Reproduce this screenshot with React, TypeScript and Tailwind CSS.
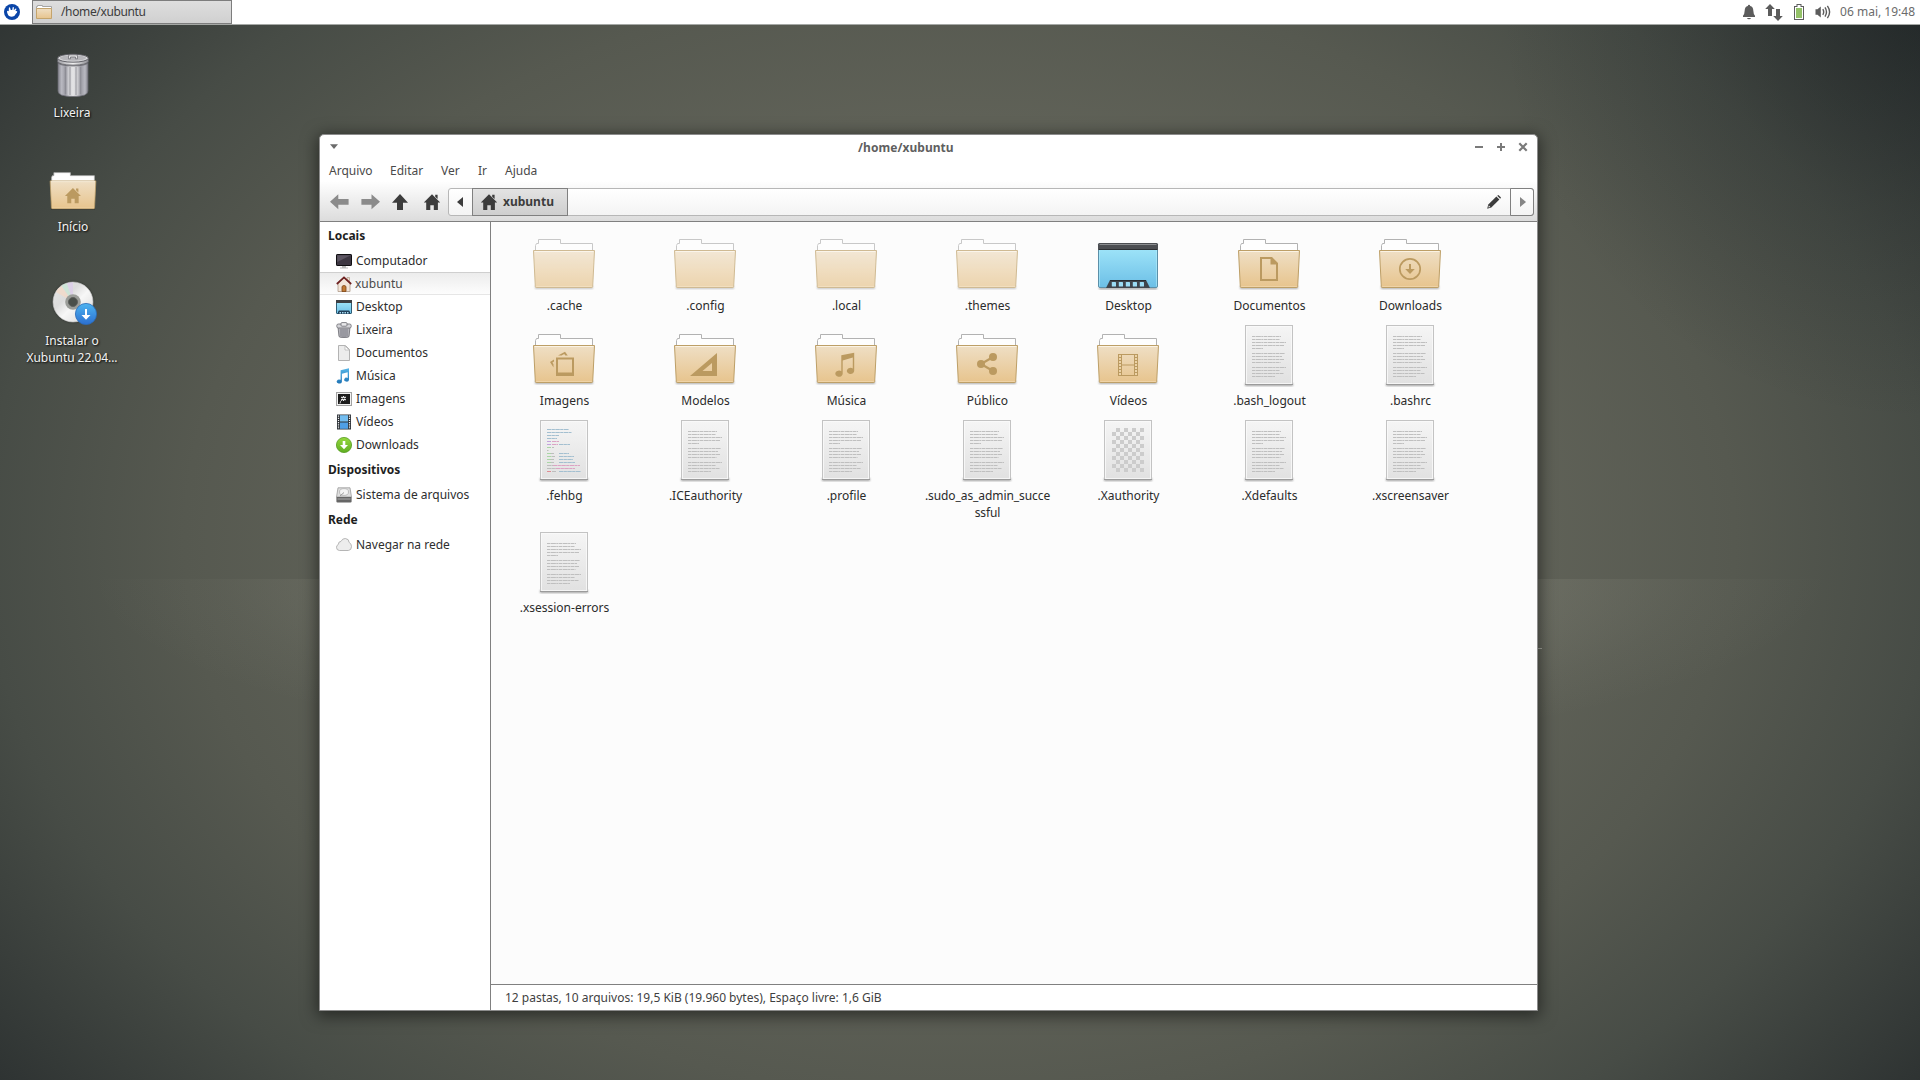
import type { ReactNode } from "react";

const GLYPH = "#bb9a60";

function HomeShape({ fill }: { fill: string }) {
  return <path fill={fill} d="M8 0.3 L16.2 8.6 H13.9 V16 H9.8 V11.3 H6.3 V16 H2.2 V8.6 H-0.2 Z M11.2 0.8 H13.6 V5 L11.2 2.8 Z" />;
}

function Defs() {
  return (
    <svg className="absolute h-0 w-0" aria-hidden="true">
      <defs>
        <linearGradient id="folder" x1="0" y1="0" x2="0" y2="1">
          <stop offset="0" stopColor="#efdfc5" />
          <stop offset="1" stopColor="#e7c48d" />
        </linearGradient>
        <linearGradient id="paper" x1="0" y1="0" x2="0" y2="1">
          <stop offset="0" stopColor="#f5f5f5" />
          <stop offset="1" stopColor="#e1e1e1" />
        </linearGradient>
        <linearGradient id="screen" x1="0" y1="0" x2="0" y2="1">
          <stop offset="0" stopColor="#a4e8fb" />
          <stop offset="1" stopColor="#6cbfe6" />
        </linearGradient>
        <linearGradient id="steel" x1="0" y1="0" x2="1" y2="0">
          <stop offset="0" stopColor="#85858e" />
          <stop offset="0.12" stopColor="#b9b9c1" />
          <stop offset="0.25" stopColor="#9b9ba3" />
          <stop offset="0.36" stopColor="#d0d0d4" />
          <stop offset="0.5" stopColor="#e4e4e6" />
          <stop offset="0.64" stopColor="#d0d0d4" />
          <stop offset="0.76" stopColor="#9b9ba3" />
          <stop offset="0.9" stopColor="#b9b9c1" />
          <stop offset="1" stopColor="#7f7f87" />
        </linearGradient>
        <linearGradient id="lid" x1="0" y1="0" x2="1" y2="0">
          <stop offset="0" stopColor="#9a9aa0" />
          <stop offset="0.5" stopColor="#f2f2f2" />
          <stop offset="1" stopColor="#8e8e94" />
        </linearGradient>
        <linearGradient id="badge" x1="0" y1="0" x2="0" y2="1">
          <stop offset="0" stopColor="#4db4f0" />
          <stop offset="1" stopColor="#2c6fd0" />
        </linearGradient>
        <linearGradient id="disc" x1="0" y1="0" x2="1" y2="1">
          <stop offset="0" stopColor="#e8e8e8" />
          <stop offset="0.35" stopColor="#dcdcdc" />
          <stop offset="0.55" stopColor="#f7f7f7" />
          <stop offset="1" stopColor="#d4d4d4" />
        </linearGradient>
        <linearGradient id="note" x1="0" y1="0" x2="0" y2="1">
          <stop offset="0" stopColor="#55b5e8" />
          <stop offset="1" stopColor="#1f74b5" />
        </linearGradient>
        <linearGradient id="green" x1="0" y1="0" x2="0" y2="1">
          <stop offset="0" stopColor="#96d83e" />
          <stop offset="1" stopColor="#5fae22" />
        </linearGradient>
        <filter id="soft" x="-20%" y="-20%" width="140%" height="140%">
          <feGaussianBlur stdDeviation="1" />
        </filter>
      </defs>
    </svg>
  );
}

function Folder({ size, dim, children }: { size: 64 | 48; dim?: boolean; children?: ReactNode }) {
  return (
    <svg viewBox="0 0 64 64" className={(size === 64 ? "size-16" : "size-12") + " overflow-visible" + (dim ? " opacity-70" : "")}>
      <path d="M3 58 H61 V61 H3 Z" fill="#000" opacity="0.3" filter="url(#soft)" />
      <path d="M3.5 25 V17.5 L4.5 15.5 L6.5 15.5 V11.5 H28.5 V15.5 H60.5 V25 Z" fill="#fefefe" stroke="#b2b2b2" strokeWidth="1" />
      <path d="M1.5 22.5 H62.5 L60.7 58.6 Q60.6 59.5 59.8 59.5 H4.2 Q3.4 59.5 3.3 58.6 Z" fill="url(#folder)" stroke="#bd9f67" strokeWidth="1" />
      <path d="M2.6 23.5 H61.4" stroke="#fbf3e4" strokeWidth="1" />
      <path d="M4.3 58.5 H59.8" stroke="#efd3a6" strokeWidth="1" />
      {children}
    </svg>
  );
}

const textRows = [
  [13, 29], [16, 28], [19, 34], [22, 32], [25, 11],
  [30, 33], [33, 30], [36, 32], [39, 28.5],
  [44, 34], [47, 28], [50, 31.5], [53, 23],
];

const scriptRows: [number, number, number, string][] = [
  [11, 0, 22, "#a3bfd0"], [14, 0, 24.5, "#a3bfd0"], [17, 0, 12, "#a3bfd0"], [20, 0, 10, "#a3bfd0"],
  [23, 0, 4, "#c3a3de"], [23, 5, 7, "#dca3c4"],
  [26, 0, 4, "#c3a3de"], [26, 5, 6, "#dca3c4"], [26, 12, 11, "#a3bfd0"],
  [29, 0, 4, "#aad6a6"], [29, 5, 2, "#bdbdbd"], [32, 0, 1.5, "#bdbdbd"],
  [35, 0, 4, "#aad6a6"], [35, 4, 3, "#bdbdbd"], [35, 12, 10, "#a3bfd0"],
  [38, 0, 5, "#aad6a6"], [38, 5, 3, "#bdbdbd"], [38, 12, 15, "#a3bfd0"],
  [41, 0, 4, "#aad6a6"], [41, 4, 3, "#bdbdbd"], [41, 12, 14, "#a3bfd0"],
  [44, 0, 4, "#aad6a6"], [44, 4, 3, "#bdbdbd"], [44, 12, 16, "#a3bfd0"],
  [47, 0, 6, "#bdbdbd"], [47, 6, 27, "#dca3c4"],
  [50, 0, 9, "#bdbdbd"], [50, 9, 19, "#dca3c4"],
  [53, 0, 4, "#e08b93"], [53, 5, 4, "#bdbdbd"], [53, 12, 22, "#a3bfd0"],
];

const checks = Array.from({ length: 88 }, (_, i) => [i % 8, Math.floor(i / 8)]).filter(([c, r]) => (c + r) % 2 === 1);

function Paper({ kind }: { kind: "text" | "script" | "binary" }) {
  return (
    <svg viewBox="0 0 64 64" className="size-16 overflow-visible">
      <path d="M8 60 H56 V63 H8 Z" fill="#000" opacity="0.35" filter="url(#soft)" />
      <rect x="8.5" y="2.5" width="47" height="59" fill="url(#paper)" stroke="#c3c3c3" />
      <rect x="9.5" y="3.5" width="45" height="57" fill="none" stroke="#fafafa" strokeOpacity="0.8" />
      <path d="M8 61.5 H56" stroke="#9b9b9b" />
      {kind === "text" &&
        textRows.map(([y, w]) => (
          <path key={y} d={`M15 ${y + 0.5} h${w}`} stroke="#bfbfbf" strokeWidth="1" strokeDasharray="3.4 0.5 5 0.4 2 0.5" />
        ))}
      {kind === "script" &&
        scriptRows.map(([y, x, w, c], i) => (
          <path key={i} d={`M${15 + x} ${y + 0.5} h${w}`} stroke={c} strokeWidth="1" strokeDasharray="4.5 0.4 3 0.4" />
        ))}
      {kind === "binary" && checks.map(([c, r]) => <rect key={`${c}-${r}`} x={16 + c * 4} y={10 + r * 4} width="4" height="4" fill="#cccccc" />)}
    </svg>
  );
}

function DesktopIcon() {
  return (
    <svg viewBox="0 0 64 64" className="size-16 overflow-visible">
      <path d="M3 59 H61 V61.5 H3 Z" fill="#000" opacity="0.35" filter="url(#soft)" />
      <rect x="2.5" y="15.5" width="59" height="44" rx="1.5" fill="url(#screen)" stroke="#5b8fa8" />
      <path d="M3.5 22 V58.5 M60.5 22 V58.5" stroke="#b4ecfb" strokeOpacity="0.6" />
      <path d="M2 22 V16.5 Q2 15 3.5 15 H60.5 Q62 15 62 16.5 V22 Z" fill="#4c4e52" />
      <path d="M3.5 16.5 H60.5" stroke="#8a8c8f" />
      <path d="M3 21.5 H61" stroke="#2c2e31" />
      <path d="M10 60 L14 52 H50 L54 60 Z" fill="#3f454c" />
      <path d="M14 52.5 H50" stroke="#262b30" />
      {[0, 1, 2, 3, 4].map((i) => (
        <rect key={i} x={15.8 + i * 7} y="54" width="4.2" height="4.6" rx="0.6" fill="#9bdcf5" />
      ))}
    </svg>
  );
}

const glyphs: Record<string, ReactNode> = {
  Documentos: (
    <path fill={GLYPH} fillRule="evenodd" d="M23 29 H35 L41 35 V53 H23 Z M25 31 V51 H39 V36.5 H33.5 V31 Z" />
  ),
  Downloads: (
    <>
      <circle cx="32" cy="41" r="10.2" fill="none" stroke={GLYPH} strokeWidth="1.7" />
      <path fill={GLYPH} d="M31 36 H33 V41 H36.8 L32 46 L27.2 41 H31 Z" />
    </>
  ),
  Imagens: (
    <>
      <path fill={GLYPH} fillRule="evenodd" d="M24 34.5 H42 V53 H24 Z M26 36.5 V49.5 H40 V36.5 Z" />
      <path fill={GLYPH} d="M26 32.5 L33 28.8 L35.8 32.5 H33.4 L32.2 31 L29.6 32.5 Z M22 36.5 L18 39 L21.5 44.5 V41.2 L20.4 39.6 L22 38.6 Z" />
    </>
  ),
  Modelos: <path fill={GLYPH} fillRule="evenodd" d="M17 53 L44 30 V53 Z M29.5 48 H39 V40 Z" />,
  Música: (
    <path fill={GLYPH} d="M27.3 32.3 L40.2 29.8 V47.8 A3.7 3.1 0 1 1 38.8 45.5 V34.6 L28.7 37.4 V50.8 A3.7 3.1 0 1 1 27.3 48.3 Z" />
  ),
  Público: (
    <>
      <path d="M38 34 L26 41 L38 48" fill="none" stroke={GLYPH} strokeWidth="2.2" />
      <circle cx="26" cy="41" r="4" fill={GLYPH} />
      <circle cx="38" cy="34" r="4" fill={GLYPH} />
      <circle cx="38" cy="48" r="4" fill={GLYPH} />
    </>
  ),
  Vídeos: (
    <>
      <path fill={GLYPH} fillRule="evenodd" d="M22 31 H42 V53 H22 Z M26 32 V41.5 H38 V32 Z M26 42.5 V52 H38 V42.5 Z" />
      {[0, 1, 2, 3, 4, 5, 6].map((i) => (
        <g key={i} fill="#ecd3a8">
          <rect x="23" y={32 + i * 3} width="2" height="2" />
          <rect x="39" y={32 + i * 3} width="2" height="2" />
        </g>
      ))}
    </>
  ),
};

type Kind = "dim" | "folder" | "desktop" | "text" | "script" | "binary";
const files: [string, Kind][] = [
  [".cache", "dim"], [".config", "dim"], [".local", "dim"], [".themes", "dim"],
  ["Desktop", "desktop"], ["Documentos", "folder"], ["Downloads", "folder"],
  ["Imagens", "folder"], ["Modelos", "folder"], ["Música", "folder"], ["Público", "folder"], ["Vídeos", "folder"],
  [".bash_logout", "text"], [".bashrc", "text"],
  [".fehbg", "script"], [".ICEauthority", "text"], [".profile", "text"], [".sudo_as_admin_successful", "text"],
  [".Xauthority", "binary"], [".Xdefaults", "text"], [".xscreensaver", "text"],
  [".xsession-errors", "text"],
];

function FileItem({ name, kind }: { name: string; kind: Kind }) {
  return (
    <div className="flex flex-col items-center pb-[9px]">
      {kind === "dim" && <Folder size={64} dim />}
      {kind === "folder" && <Folder size={64}>{glyphs[name]}</Folder>}
      {kind === "desktop" && <DesktopIcon />}
      {(kind === "text" || kind === "script" || kind === "binary") && <Paper kind={kind} />}
      <div
        className={
          "mt-[5px] w-[128px] pl-px text-center leading-[17px] break-all text-[#2b2b2b]" +
          (name.length > 20 ? " tracking-[-0.08px]" : "")
        }
      >
        {name}
      </div>
    </div>
  );
}

function TrashCan({ className }: { className: string }) {
  return (
    <svg viewBox="0 0 32 44" className={className}>
      <path d="M1 8 H31 V38 Q31 43.5 16 43.5 Q1 43.5 1 38 Z" fill="url(#steel)" stroke="#6a6a72" strokeWidth="0.7" />
      <path d="M8.5 14 V41 M13 14 V42 M19 14 V42 M23.5 14 V41" stroke="#808088" strokeWidth="1.5" opacity="0.5" />
      <ellipse cx="16" cy="10" rx="15" ry="3.4" fill="#55555c" opacity="0.6" />
      <path d="M0.6 5.5 V8.4 Q2 12 16 12 Q30 12 31.4 8.4 V5.5 Z" fill="url(#lid)" stroke="#5c5c62" strokeWidth="0.7" />
      <ellipse cx="16" cy="5.2" rx="15.3" ry="4" fill="#dadadc" stroke="#55555b" strokeWidth="0.9" />
      <ellipse cx="16" cy="5" rx="13" ry="2.7" fill="#b6b6ba" />
      <path d="M11.5 5.8 V3 Q11.5 1.8 13 1.8 H19 Q20.5 1.8 20.5 3 V5.8 H18.5 V4 H13.5 V5.8 Z" fill="#e2e2e4" stroke="#66666b" strokeWidth="0.7" />
    </svg>
  );
}

const placeIcons: Record<string, ReactNode> = {
  Computador: (
    <svg viewBox="0 0 16 16" className="size-4">
      <rect x="0.5" y="1.5" width="15" height="11" rx="0.6" fill="#3c3641" stroke="#0e0d10" />
      <path d="M1.2 2.2 H14.8 L1.2 9 Z" fill="#6a6371" opacity="0.7" />
      <path d="M6 13 H10 V14.5 H12 V15.5 H4 V14.5 H6 Z" fill="#b9b9b9" />
    </svg>
  ),
  xubuntu: (
    <svg viewBox="0 0 16 16" className="size-4">
      <path d="M11 1.5 H13.5 V6 H11 Z" fill="#e8ddd0" stroke="#a8907e" strokeWidth="0.6" />
      <path d="M2 7 L8 2 L14 7 V15.5 H2 Z" fill="#f2e6da" stroke="#b09a88" strokeWidth="0.8" />
      <path d="M6 15.5 V11 Q6 9.5 8 9.5 Q10 9.5 10 11 V15.5 Z" fill="#c07a34" stroke="#7d4515" strokeWidth="0.8" />
      <path d="M0.8 8 L8 1.4 L15.2 8" fill="none" stroke="#6d2020" strokeWidth="1.7" />
    </svg>
  ),
  Desktop: (
    <svg viewBox="0 0 16 16" className="size-4">
      <rect x="0.5" y="1.5" width="15" height="13" rx="0.5" fill="url(#screen)" stroke="#2f5d75" />
      <path d="M0 1 H16 V4 H0 Z" fill="#3c3f43" />
      <path d="M2 15 V12.5 L3 11.5 H13 L14 12.5 V15 Z" fill="#22415a" />
      <path d="M3.5 13 H5 V14.5 H3.5 Z M6 13 H7.5 V14.5 H6 Z M8.5 13 H10 V14.5 H8.5 Z M11 13 H12.5 V14.5 H11 Z" fill="#a5dbf2" />
    </svg>
  ),
  Lixeira: (
    <svg viewBox="0 0 16 16" className="size-4">
      <path d="M2 5 H14 L13 14.5 Q13 15.5 8 15.5 Q3 15.5 3 14.5 Z" fill="#b5b5bb" stroke="#74747b" strokeWidth="0.9" />
      <path d="M5 7 V14.5 M7 7 V15 M9 7 V15 M11 7 V14.5" stroke="#70707a" strokeWidth="0.8" />
      <rect x="0.8" y="2" width="14.4" height="4" rx="1.6" fill="#d4d4d8" stroke="#77777d" strokeWidth="0.9" />
      <rect x="5" y="0.6" width="6" height="3.6" rx="1" fill="#e8e8ea" stroke="#77777d" strokeWidth="0.9" />
    </svg>
  ),
  Documentos: (
    <svg viewBox="0 0 16 16" className="size-4">
      <path d="M2.5 0.5 H9.5 L13.5 4.5 V15.5 H2.5 Z" fill="#ececec" stroke="#b3b3b3" />
      <path d="M9 1 V5 H13.2 Z" fill="#fdfdfd" stroke="#b9b9b9" strokeWidth="0.8" />
    </svg>
  ),
  Música: (
    <svg viewBox="0 0 16 16" className="size-4">
      <path fill="url(#note)" d="M4.6 2.2 L13 0.2 V12 A2.4 2 0 1 1 11.7 9.9 V4.2 L5.9 5.7 V14 A2.6 2 0 1 1 4.6 11.8 Z" />
    </svg>
  ),
  Imagens: (
    <svg viewBox="0 0 16 16" className="size-4">
      <rect x="0.5" y="1.5" width="15" height="13" fill="#f2f2f2" stroke="#a2a2a2" />
      <rect x="2" y="3" width="12" height="10" fill="#1d1d1d" />
      <path d="M7.5 5 V10 M5.2 6 L9.8 9 M9.8 6 L5.2 9" stroke="#f0f0f0" strokeWidth="1.3" />
      <circle cx="7.5" cy="7.5" r="0.8" fill="#1d1d1d" />
      <path d="M5.8 9 Q4 10.5 4 12.5" stroke="#d8d8d8" fill="none" />
    </svg>
  ),
  Vídeos: (
    <svg viewBox="0 0 16 16" className="size-4">
      <rect x="1" y="0.5" width="14" height="15" fill="#2f343a" />
      <rect x="4" y="1.2" width="8" height="6.3" fill="#73bdf0" />
      <rect x="4" y="8.5" width="8" height="6.3" fill="#4f9fe6" />
      <path d="M2.5 1.5 V15 M13.5 1.5 V15" stroke="#f3f3f3" strokeWidth="1.2" strokeDasharray="1.2 1" />
    </svg>
  ),
  Downloads: (
    <svg viewBox="0 0 16 16" className="size-4">
      <circle cx="8" cy="8" r="7.6" fill="url(#green)" stroke="#559c1f" strokeWidth="0.8" />
      <path d="M6.7 4 H9.3 V8 H12 L8 12.2 L4 8 H6.7 Z" fill="#fff" />
    </svg>
  ),
  "Sistema de arquivos": (
    <svg viewBox="0 0 16 16" className="size-4">
      <path d="M2 0.8 H14 L15.5 10 H0.5 Z" fill="#dedede" stroke="#9a9a9a" strokeWidth="0.8" />
      <ellipse cx="8" cy="5" rx="4.5" ry="3.4" fill="#f4f4f4" stroke="#b0b0b0" strokeWidth="0.8" />
      <path d="M8 5.5 L4 9" stroke="#9d9d9d" />
      <path d="M0.4 10 H15.6 V14.5 Q15.6 15.6 14.5 15.6 H1.5 Q0.4 15.6 0.4 14.5 Z" fill="#666" />
      <path d="M1.5 12 H14.5" stroke="#a8a8a8" />
    </svg>
  ),
  "Navegar na rede": (
    <svg viewBox="0 0 16 16" className="size-4">
      <path d="M3.4 13.5 Q0.5 13.3 0.5 10.3 Q0.5 8.2 2.4 7.4 Q2.2 4.6 5 4.4 Q6.3 1.4 9.3 1.5 Q13 1.8 13.2 5.5 Q15.5 6.6 15.5 9.6 Q15.4 13.4 12.3 13.5 Z" fill="#ededed" stroke="#aeaeae" strokeWidth="0.9" />
    </svg>
  ),
};

function Header({ children }: { children: string }) {
  return <div className="h-[27px] pl-2 leading-[28px] font-bold text-[#1e1e1e]">{children}</div>;
}

function Place({ name, active }: { name: string; active?: boolean }) {
  return (
    <div
      className={
        "flex h-[23px] items-center gap-1 pl-4 " +
        (active
          ? "border-t border-b border-t-[#cfcfcf] border-b-[#e6e6e6] bg-linear-to-b from-[#ececec] to-[#fdfdfd] text-[#4a4a4a]"
          : "text-[#2e2e2e]")
      }
    >
      {placeIcons[name]}
      <span className={active ? "-ml-px leading-[17px]" : "leading-[17px]"}>{name}</span>
    </div>
  );
}

function Sidebar() {
  return (
    <div className="w-[171px] shrink-0 border-r border-[#808080] bg-white">
      <Header>Locais</Header>
      <Place name="Computador" />
      <Place name="xubuntu" active />
      <Place name="Desktop" />
      <Place name="Lixeira" />
      <Place name="Documentos" />
      <Place name="Música" />
      <Place name="Imagens" />
      <Place name="Vídeos" />
      <Place name="Downloads" />
      <Header>Dispositivos</Header>
      <Place name="Sistema de arquivos" />
      <Header>Rede</Header>
      <Place name="Navegar na rede" />
    </div>
  );
}

function TitleBar() {
  return (
    <div className="flex h-[24px] items-center pr-[10px] pl-[10px]">
      <svg viewBox="0 0 8 6" className="h-[6px] w-2">
        <path d="M0 0.3 H8 L4 5 Z" fill="#6b6b6b" />
      </svg>
      <div className="flex-1 pl-[14px]">
        <div className="ml-[506px] leading-[17px] font-bold tracking-[0.05px] whitespace-nowrap text-[#5f5f5f]">/home/xubuntu</div>
      </div>
      <div className="flex items-center gap-[14px]">
        <svg viewBox="0 0 8 8" className="size-2">
          <path d="M0 3 H8 V5 H0 Z" fill="#7a7a7a" />
        </svg>
        <svg viewBox="0 0 8 8" className="size-2">
          <path d="M0 3 H3 V0 H5 V3 H8 V5 H5 V8 H3 V5 H0 Z" fill="#7a7a7a" />
        </svg>
        <svg viewBox="0 0 8 8" className="size-2 overflow-visible">
          <path d="M0.3 0.3 L7.7 7.7 M7.7 0.3 L0.3 7.7" stroke="#7a7a7a" strokeWidth="2.2" />
        </svg>
      </div>
    </div>
  );
}

function Toolbar() {
  return (
    <div className="flex h-[41px] items-center border-b border-[#808080] bg-linear-to-b from-white to-[#dcdcdc] pt-px pr-[3px] pl-[10px]">
      <svg viewBox="0 0 19 16" className="h-4 w-[19px]">
        <path d="M0 7.8 L8.3 0.3 V4.9 H18.6 V10.7 H8.3 V15.3 Z" fill="#8b8b8b" />
      </svg>
      <svg viewBox="0 0 19 16" className="ml-[12px] h-4 w-[19px]">
        <path d="M19 7.8 L10.5 0.3 V4.9 H0.4 V10.7 H10.5 V15.3 Z" fill="#8b8b8b" />
      </svg>
      <svg viewBox="0 0 16 16" className="ml-[12px] h-4 w-4">
        <path d="M8 0 L16 8.8 H11 V16 H5 V8.8 H0 Z" fill="#3c3c3c" />
      </svg>
      <svg viewBox="0 0 16 16" className="ml-[16px] size-4 overflow-visible">
        <HomeShape fill="#3c3c3c" />
      </svg>
      <div className="ml-[8px] flex h-[28px] flex-1 items-stretch rounded-[3px] border border-[#b7b7b7] bg-linear-to-b from-white to-[#f4f4f4]">
        <div className="flex w-[23px] items-center justify-center pr-px">
          <svg viewBox="0 0 6 10" className="h-[10px] w-[6px]">
            <path d="M6 0 V10 L0 5 Z" fill="#3c3c3c" />
          </svg>
        </div>
        <div className="-my-px flex w-[96px] items-center border border-[#808080] bg-linear-to-b from-[#e3e3e3] to-[#cfcfcf] pl-2 font-bold text-[#3c3c3c]">
          <svg viewBox="0 0 16 16" className="mr-[6px] size-4 overflow-visible">
            <HomeShape fill="#3c3c3c" />
          </svg>
          xubuntu
        </div>
        <div className="flex flex-1 items-center justify-end pr-2">
          <svg viewBox="0 0 16 16" className="size-4">
            <path d="M1.2 14.8 L2.3 10.6 L10.4 2.5 L13.4 5.5 L5.3 13.6 Z" fill="#3c3c3c" />
            <path d="M11.2 1.8 L12.4 0.9 L15 3.5 L14.2 4.8 Z" fill="#3c3c3c" />
            <path d="M2.4 13.6 L2.9 11.6 L4.3 13 Z" fill="#f7f7f7" />
          </svg>
        </div>
        <div className="-my-px -mr-px flex w-[24px] items-center justify-center rounded-r-[3px] border border-[#808080] pl-[2px]">
          <svg viewBox="0 0 6 10" className="h-[10px] w-[6px]">
            <path d="M0 0 V10 L6 5 Z" fill="#858585" />
          </svg>
        </div>
      </div>
    </div>
  );
}

function FileManager() {
  return (
    <div className="absolute top-[134px] left-[319px] flex h-[877px] w-[1219px] flex-col overflow-hidden rounded-t-[5px] border border-[#8c8c8c] bg-white">
      <TitleBar />
      <div className="flex h-[22px] items-center pl-[9px] text-[#4a4a4a]">
        <span className="w-[61px]">Arquivo</span>
        <span className="w-[51px]">Editar</span>
        <span className="w-[37px]">Ver</span>
        <span className="w-[27px]">Ir</span>
        <span>Ajuda</span>
      </div>
      <Toolbar />
      <div className="flex min-h-0 flex-1">
        <Sidebar />
        <div className="flex flex-1 flex-col">
          <div className="flex-1 bg-[#fcfcfc] pt-[6px] pl-[2.5px]">
            <div className="grid grid-cols-[repeat(7,141px)]">
              {files.map(([name, kind]) => (
                <FileItem key={name} name={name} kind={kind} />
              ))}
            </div>
          </div>
          <div className="h-[26px] border-t border-[#808080] bg-white pl-[14px] leading-[26px] text-[#3f3f3f]">
            12 pastas, 10 arquivos: 19,5 KiB (19.960 bytes), Espaço livre: 1,6 GiB
          </div>
        </div>
      </div>
    </div>
  );
}

function Panel() {
  return (
    <div className="relative flex h-[25px] items-center border-b border-[#a5a8a5] bg-white">
      <svg viewBox="0 0 16 16" className="ml-1 size-4">
        <circle cx="8" cy="8" r="8" fill="#0a45a8" />
        <path d="M3 7.2 Q3.6 6.2 4.7 7.2 L4.9 3.8 Q5.4 2.8 6.1 3.8 L6.8 6 L8.2 6 L8.7 3.2 Q9.4 2.5 9.9 3.4 L9.7 6.2 L11.6 4.6 Q12.6 4.2 12.3 5.4 L11.4 7 Q13 6.6 13.3 7.6 Q13.2 9 11.9 9.8 Q11 12.5 7.9 12.7 Q4.4 12.5 3.8 10.2 Q3 8.6 3 7.2 Z" fill="#fff" />
      </svg>
      <div className="ml-[12px] flex h-[24px] w-[200px] items-center border border-[#7d7d7d] bg-linear-to-b from-[#dedede] to-[#d0d0d0] pl-[3px] text-[#3c3c3c]">
        <svg viewBox="0 0 16 16" className="mr-[9px] size-4">
          <path d="M0.5 4 V2.5 H1.5 V1.5 H6.5 V2.5 H15.5 V5 H0.5 Z" fill="#fff" stroke="#a5a5a5" />
          <path d="M0.5 4.5 H15.5 V14.5 H0.5 Z" fill="url(#folder)" stroke="#c4a46c" />
        </svg>
        <span className="-mt-px pb-px tracking-[-0.36px]">/home/xubuntu</span>
      </div>
      <div className="ml-auto flex items-center pr-[5px]">
        <svg viewBox="0 0 16 16" className="size-4">
          <path d="M8 0.8 Q9 0.8 9.2 1.9 Q12.3 2.8 12.3 6.5 Q12.4 10 14 11.8 V13 H2 V11.8 Q3.6 10 3.7 6.5 Q3.7 2.8 6.8 1.9 Q7 0.8 8 0.8 Z M6 14 H10 Q9.6 15.3 8 15.3 Q6.4 15.3 6 14 Z" fill="#5c5c5c" />
        </svg>
        <svg viewBox="0 0 18 17" className="ml-[8px] h-[17px] w-[18px]">
          <path d="M5 0 L9.8 5 H7 V12 H3 V5 H0.2 Z M13 17 L8.2 12 H11 V5 H15 V12 H17.8 Z" fill="#5c5c5c" />
        </svg>
        <svg viewBox="0 0 16 16" className="ml-[8px] size-4">
          <path d="M5.5 0 H10.5 V2 H13 V16 H3 V2 H5.5 Z" fill="#5c5c5c" />
          <path d="M6.5 1 H9.5 V3 H12 V15 H4 V3 H6.5 Z" fill="#fff" />
          <path d="M5 4 H11 V14 H5 Z" fill="#93c168" />
        </svg>
        <svg viewBox="0 0 16 16" className="ml-[8px] size-4">
          <path d="M0.5 5.3 H2.5 L5.8 2.5 V13.5 L2.5 10.7 H0.5 Z" fill="#5c5c5c" />
          <path d="M7.8 5.2 Q9.6 8 7.8 10.8 M10 3.4 Q13 8 10 12.6 M12.4 1.8 Q16.8 8 12.4 14.2" fill="none" stroke="#5c5c5c" strokeWidth="1.4" />
        </svg>
        <span className="ml-[9px] pb-[2px] text-[#6b6b6b]">06 mai, 19:48</span>
      </div>
    </div>
  );
}

function Launcher({ className, label, children }: { className: string; label: ReactNode; children: ReactNode }) {
  return (
    <div className={"absolute flex w-[120px] flex-col items-center " + className}>
      {children}
      <div className="mt-[6px] text-center leading-[17px] whitespace-nowrap text-[#f2f2f2] [text-shadow:1px_1px_2px_rgba(0,0,0,0.9)]">{label}</div>
    </div>
  );
}

export default function App() {
  return (
    <div className="relative h-[1080px] w-[1920px] overflow-hidden bg-[radial-gradient(ellipse_1250px_900px_at_960px_540px,#6a6b61_0%,#606258_45%,#565950_62%,#474c46_78%,#2b3030_100%)] font-['Noto_Sans',sans-serif] text-[12px] leading-[17px]">
      <Defs />
      <div className="absolute inset-0 bg-[radial-gradient(ellipse_420px_420px_at_100%_0%,rgba(24,30,32,0.5)_0%,rgba(24,30,32,0.2)_50%,rgba(24,30,32,0)_100%)]" />
      <div className="absolute top-[579px] left-0 h-[501px] w-full bg-[radial-gradient(ellipse_870px_190px_at_960px_0px,rgba(190,190,175,0.3)_0%,rgba(190,190,175,0.12)_65%,rgba(190,190,175,0.04)_85%,rgba(190,190,175,0)_100%)]" />
      <div className="absolute top-[648px] left-[1538px] h-px w-[4px] bg-[#a6a79e]" />
      <Panel />
      <Launcher className="top-[52px] left-[12px]" label="Lixeira">
        <div className="flex h-[46px] pt-px pl-[2px]">
          <TrashCan className="h-[44px] w-[32px] overflow-visible" />
        </div>
      </Launcher>
      <Launcher className="top-[164px] left-[13px]" label="Início">
        <Folder size={48}>
          <g transform="translate(21.5 31.5) scale(1.3)">
            <HomeShape fill={GLYPH} />
          </g>
        </Folder>
      </Launcher>
      <Launcher
        className="top-[278px] left-[12px]"
        label={
          <>
            Instalar o<br />
            <span className="tracking-[-0.05px]">Xubuntu 22.04...</span>
          </>
        }
      >
        <svg viewBox="0 0 48 48" className="size-12 overflow-visible">
          <g transform="translate(1 0)">
            <circle cx="24" cy="24" r="20.5" fill="#000" opacity="0.3" filter="url(#soft)" />
            <circle cx="24" cy="24" r="20" fill="url(#disc)" stroke="#c5c5c5" strokeWidth="0.6" />
            <path d="M24 24 L7 14 Q9 10 12.5 8 Z" fill="#f3d9c8" opacity="0.8" />
            <path d="M24 24 L12.5 8 Q15 6 18 5.2 Z" fill="#c9e6d6" opacity="0.8" />
            <path d="M24 24 L18 5.2 Q21 4.3 24 4.3 Z" fill="#dccdea" opacity="0.8" />
            <circle cx="24" cy="24" r="7.8" fill="#9b9d99" />
            <circle cx="24" cy="24" r="4.5" fill="#4a4f4a" stroke="#5f615e" />
            <circle cx="37" cy="36" r="10.6" fill="url(#badge)" stroke="#2a6bb8" strokeWidth="0.8" />
            <path d="M36 31 H38 V37 H41.5 L37 41.8 L32.5 37 H36 Z" fill="#fff" />
          </g>
        </svg>
      </Launcher>
      <div className="absolute top-[134px] left-[319px] h-[877px] w-[1219px] rounded-t-[5px] shadow-[0_3px_16px_2px_rgba(0,0,0,0.5)]" />
      <FileManager />
    </div>
  );
}
